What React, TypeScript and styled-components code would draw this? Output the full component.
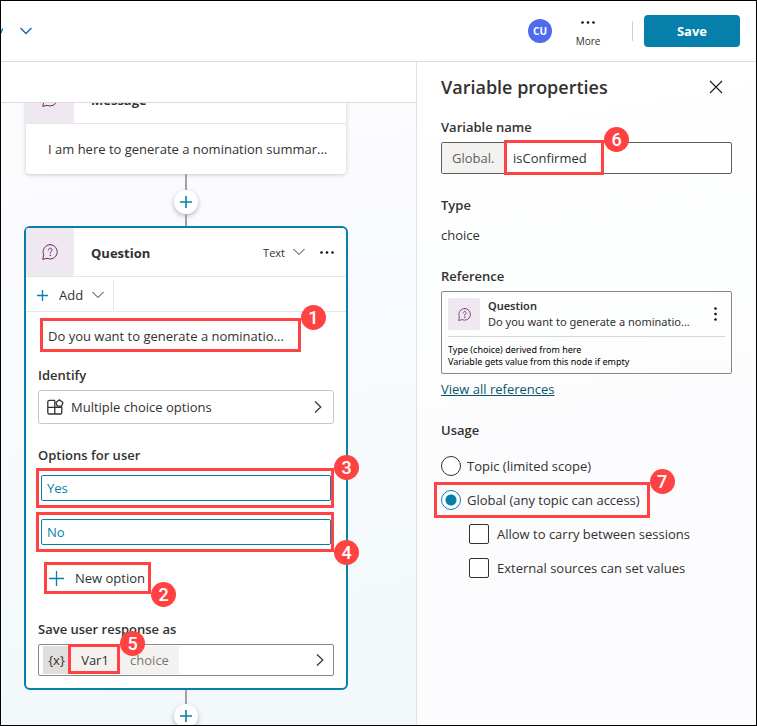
import React from 'react';
import styled, { createGlobalStyle, css } from 'styled-components';

const teal = '#067fab';
const red = '#ff4242';

const GlobalStyle = createGlobalStyle`
  *, *::before, *::after { box-sizing: border-box; }
  body { margin: 0; background: #fff; }
  body, button, input { font-family: 'Open Sans', 'Noto Sans', sans-serif; font-size: 13px; color: #323130; }
  button { margin: 0; padding: 0; border: 0; background: none; cursor: pointer; }
  svg { display: block; flex: none; }
  h1, h2, h3, p { margin: 0; }
`;

const Page = styled.div`
  display: flex;
  flex-direction: column;
  height: 100vh;
  border: 1px solid #000;
  overflow: hidden;
`;

const TopBar = styled.header`
  flex: none;
  display: flex;
  align-items: center;
  height: 61px;
  padding-right: 16px;
  border-bottom: 1px solid #dcdcdc;
  background: #fff;
`;

const TopicMenu = styled.button`
  display: flex;
  align-items: center;
  gap: 17px;
  color: #1464a8;
`;

const Actions = styled.div`
  display: flex;
  align-items: center;
  margin-left: auto;
`;

const Avatar = styled.button`
  width: 24px;
  height: 24px;
  margin-right: 23px;
  border-radius: 50%;
  background: #4f6bed;
  color: #fff;
  font-size: 10px;
  font-weight: 700;
`;

const MoreButton = styled.button`
  display: flex;
  flex-direction: column;
  align-items: center;
  gap: 9px;
  width: 26px;
  margin-right: 31px;
  padding-top: 7px;
  font-size: 10px;
  line-height: 16px;
`;

const Divider = styled.span`
  width: 1px;
  height: 20px;
  margin-right: 11px;
  background: #d2d0ce;
`;

const SaveButton = styled.button`
  width: 96px;
  height: 32px;
  border-radius: 4px;
  background: ${teal};
  color: #fff;
  font-weight: 700;
`;

const Workspace = styled.div`
  flex: 1;
  display: flex;
  min-height: 0;
`;

const Editor = styled.main`
  flex: 1;
  display: flex;
  flex-direction: column;
  min-width: 0;
`;

const Toolbar = styled.div`
  flex: none;
  height: 41px;
  border-bottom: 1px solid #dcdcdc;
  background: #fff;
`;

const Canvas = styled.div`
  flex: 1;
  min-height: 0;
  padding-left: 23px;
  overflow: hidden;
  background: linear-gradient(170deg, #fcfcfe 0%, #f9faff 35%, #f4f9fb 75%, #f2f7fa 100%);
`;

const Flow = styled.div`
  display: flex;
  flex-direction: column;
  align-items: center;
  width: 324px;
  margin-top: -28px;
`;

const MessageCard = styled.section`
  width: 320px;
  border-radius: 4px;
  background: #fff;
  box-shadow: 0 1px 4px rgba(0, 0, 0, 0.2);
`;

const QuestionCard = styled.section`
  width: 100%;
  border: 2px solid ${teal};
  border-radius: 6px;
  background: #fff;
`;

const CardHeader = styled.div`
  display: flex;
  align-items: center;
  height: 49px;
  padding-right: 12px;
  border-bottom: 1px solid #e6e6e6;
`;

const IconTile = styled.span<{ $size: number }>`
  flex: none;
  display: flex;
  align-items: center;
  justify-content: center;
  width: ${(p) => p.$size}px;
  height: ${(p) => p.$size}px;
  border-radius: 2px;
  background: #efe8f0;
  color: #742774;
`;

const CardTitle = styled.h2`
  flex: 1;
  margin-left: 17px;
  padding-top: 2px;
  font-size: 13px;
  line-height: 20px;
  font-weight: 700;
`;

const KindButton = styled.button`
  display: flex;
  align-items: center;
  gap: 8px;
  margin-right: 15px;
  font-size: 11px;
`;

const MessageText = styled.p`
  padding: 15px 12px 15px 22px;
  line-height: 20px;
  white-space: nowrap;
`;

const Stem = styled.span<{ $length: number }>`
  width: 2px;
  height: ${(p) => p.$length}px;
  background: #a3a3a3;
`;

const AddNode = styled.button`
  flex: none;
  display: flex;
  align-items: center;
  justify-content: center;
  width: 24px;
  height: 24px;
  border-radius: 50%;
  background: #fff;
  color: ${teal};
  box-shadow: 0 2px 5px rgba(0, 0, 0, 0.26);
`;

const AddBar = styled.div`
  display: flex;
  height: 35px;
  border-bottom: 1px solid #e6e6e6;
`;

const AddButton = styled.button`
  display: flex;
  align-items: center;
  gap: 9px;
  margin: 3px 0 1px;
  padding: 0 9px 0 11px;
  border-right: 1px solid #e6e6e6;

  svg:first-child { margin-right: 2px; color: ${teal}; }
`;

const CardBody = styled.div`
  padding: 6px 12px 12px;
`;

const Marked = styled.div`
  position: relative;
`;

const Prompt = styled(Marked)`
  width: max-content;
  padding: 8px 10px 6px;
  line-height: 20px;
  white-space: nowrap;
`;

const FieldLabel = styled.label<{ $above?: number; $below?: number }>`
  display: block;
  margin-top: ${(p) => p.$above ?? 0}px;
  margin-bottom: ${(p) => p.$below ?? 5}px;
  line-height: 20px;
  font-weight: 600;
`;

const PickerButton = styled.button`
  display: flex;
  align-items: center;
  gap: 7px;
  width: 100%;
  height: 34px;
  padding: 0 11px 0 8px;
  border: 1px solid #c8c6c4;
  border-radius: 3px;
  background: #fff;

  svg:last-child { margin-left: auto; }
`;

const OptionRow = styled(Marked)`
  height: 40px;
  margin-bottom: 4px;
  padding: 7px 3px;
`;

const OptionInput = styled.input`
  display: block;
  width: 100%;
  height: 26px;
  padding: 0 5px;
  border: 1px solid ${teal};
  border-radius: 2px;
  outline: 0;
  background: #fff;
  color: ${teal};
`;

const NewOption = styled.button`
  position: relative;
  display: flex;
  align-items: center;
  gap: 11px;
  height: 32px;
  margin: 10px 0 0 6px;
  padding: 0 6px 0 5px;

  svg { color: ${teal}; }
`;

const ResponseField = styled.div`
  display: flex;
  align-items: center;
  height: 32px;
  padding: 0 9px 0 4px;
  border: 1px solid #8a8886;
  border-radius: 2px;
  background: #fff;
`;

const Token = styled.span<{ $tone: string; $dim?: boolean; $width: number }>`
  position: relative;
  display: flex;
  align-items: center;
  justify-content: center;
  width: ${(p) => p.$width}px;
  height: 28px;
  background: ${(p) => p.$tone};
  color: ${(p) => (p.$dim ? '#797775' : '#323130')};
`;

const OpenButton = styled.button`
  margin-left: auto;
`;

const Panel = styled.aside`
  flex: none;
  width: 340px;
  padding: 11px 24px;
  border-left: 1px solid #e1e1e1;
  background: linear-gradient(170deg, #ffffff 0%, #fdfefe 35%, #fcfcfe 60%, #fcfcfe 100%);
`;

const PanelHeader = styled.div`
  display: flex;
  align-items: center;
  justify-content: space-between;
  height: 28px;
  margin-bottom: 16px;
  padding-right: 9px;
`;

const PanelTitle = styled.h1`
  font-size: 18px;
  line-height: 28px;
  font-weight: 600;
`;

const NameField = styled.div`
  display: flex;
  height: 32px;
  border: 1px solid #605e5c;
  border-radius: 2px;
  background: #fff;
`;

const NamePrefix = styled.span`
  display: flex;
  align-items: center;
  width: 62px;
  padding-left: 10px;
  background: #f3f2f1;
  color: #605e5c;
`;

const NameInputWrap = styled(Marked)`
  flex: 1;
  display: flex;
`;

const NameInput = styled.input`
  width: 100%;
  padding: 0 9px;
  border: 0;
  outline: 0;
  background: transparent;
`;

const SectionTitle = styled.h3<{ $above: number }>`
  margin-top: ${(p) => p.$above}px;
  font-size: 13px;
  line-height: 20px;
  font-weight: 600;
`;

const TypeValue = styled.p`
  margin-top: 10px;
  line-height: 20px;
`;

const ReferenceCard = styled.div`
  margin-top: 5px;
  padding: 6px 6px 5px;
  border: 1px solid #8a8886;
  border-radius: 2px;
`;

const ReferenceTop = styled.div`
  display: flex;
  align-items: center;
  gap: 8px;
  padding-bottom: 6px;
  border-bottom: 1px solid #d6d6d6;
`;

const ReferenceText = styled.div`
  flex: 1;
  min-width: 0;
  font-family: 'Noto Sans', sans-serif;
  font-size: 11px;
  line-height: 16px;
  white-space: nowrap;

  strong { display: block; font-weight: 600; }
`;

const KebabButton = styled.button`
  padding: 0 8px;
`;

const ReferenceNote = styled.p`
  padding-top: 7px;
  font-family: 'Noto Sans', sans-serif;
  font-size: 9px;
  line-height: 12px;
  color: #000;
`;

const ReferencesLink = styled.a`
  display: block;
  width: max-content;
  margin-top: 5px;
  line-height: 20px;
  color: #0b556a;
`;

const Choice = styled.label<{ $nested?: boolean }>`
  position: relative;
  display: flex;
  align-items: center;
  gap: ${(p) => (p.$nested ? 8 : 6)}px;
  width: max-content;
  height: 34px;
  margin-left: ${(p) => (p.$nested ? 28 : 0)}px;
`;

const boxControl = css`
  appearance: none;
  width: 20px;
  height: 20px;
  margin: 0;
  border: 1px solid #323130;
  background: #fff;
`;

const Radio = styled.input`
  ${boxControl}
  border-radius: 50%;

  &:checked {
    border-color: ${teal};
    background: radial-gradient(circle, ${teal} 5px, #fff 6px);
  }
`;

const Checkbox = styled.input`
  ${boxControl}
  border-radius: 2px;

  &:checked { background: ${teal}; }
`;

const ChoiceList = styled.div`
  margin-top: 9px;
`;

const Outline = styled.span<{ $inset: string }>`
  position: absolute;
  inset: ${(p) => p.$inset};
  border: 3px solid ${red};
  pointer-events: none;
  z-index: 1;
`;

const Badge = styled.span<{ $bottom?: boolean }>`
  position: absolute;
  left: calc(100% + 3px);
  ${(p) => (p.$bottom ? 'bottom' : 'top')}: -16px;
  display: flex;
  align-items: center;
  justify-content: center;
  width: 25px;
  height: 25px;
  border-radius: 50%;
  background: ${red};
  color: #fff;
  font: 500 18px/25px Roboto, sans-serif;
`;

function Callout({ step, inset = '0', bottom }: { step: number; inset?: string; bottom?: boolean }) {
  return (
    <Outline $inset={inset}>
      <Badge $bottom={bottom}>{step}</Badge>
    </Outline>
  );
}

const ChevronDown = ({ weight = 1 }: { weight?: number }) => (
  <svg width="12" height="8" viewBox="0 0 12 8" fill="none" stroke="currentColor" strokeWidth={weight}>
    <path d="M0.5 1L6 6.5L11.5 1" />
  </svg>
);

const ChevronRight = () => (
  <svg width="8" height="14" viewBox="0 0 8 14" fill="none" stroke="currentColor" strokeWidth="1.2">
    <path d="M1 1.5L6.8 7L1 12.5" />
  </svg>
);

const Plus = ({ size, weight = 1.3 }: { size: number; weight?: number }) => (
  <svg width={size} height={size} viewBox={`0 0 ${size} ${size}`} fill="none" stroke="currentColor" strokeWidth={weight}>
    <path d={`M${size / 2} 0V${size}M0 ${size / 2}H${size}`} />
  </svg>
);

const Dots = ({ vertical }: { vertical?: boolean }) => (
  <svg width={vertical ? 3 : 14} height={vertical ? 14 : 3} viewBox={vertical ? '0 0 3 14' : '0 0 14 3'} fill="#111">
    {[1.5, 7, 12.5].map((c) => (
      <circle key={c} cx={vertical ? 1.5 : c} cy={vertical ? c : 1.5} r="1.3" />
    ))}
  </svg>
);

const QuestionBubble = ({ size }: { size: number }) => (
  <svg width={size} height={size} viewBox="0 0 16 16" fill="none" stroke="currentColor" strokeLinecap="round" strokeLinejoin="round">
    <path d="M8.3 0.6A7.2 7.2 0 1 1 5 14.3L0.7 15.4L1.8 11A7.2 7.2 0 0 1 8.3 0.6Z" />
    <path d="M6.4 6C6.4 3.5 10 3.5 10 5.9C10 7.4 8.2 7.5 8.2 9.2" />
    <circle cx="8.2" cy="11.3" r="0.4" fill="currentColor" strokeWidth="0.6" />
  </svg>
);

const ShapesIcon = () => (
  <svg width="17" height="16" viewBox="0 0 17 16" fill="none" stroke="currentColor" strokeWidth="1.3" strokeLinejoin="round">
    <path d="M8 1.4H2.4A1.6 1.6 0 0 0 0.8 3V13.4A1.6 1.6 0 0 0 2.4 15H13.2A1.6 1.6 0 0 0 14.8 13.4V8.3H0.8M7.8 1.4V15" />
    <path d="M12.4 0.8L15.9 3.4L14.6 7.2H10.2L8.9 3.4Z" />
  </svg>
);

const CloseIcon = () => (
  <svg width="14" height="14" viewBox="0 0 14 14" fill="none" stroke="#222" strokeWidth="1.2">
    <path d="M1 1L13 13M13 1L1 13" />
  </svg>
);

const LetterTail = () => (
  <svg width="2" height="6" viewBox="0 0 2 6" fill="none" stroke={teal} strokeWidth="1.4">
    <path d="M1.6 0.5L0 5" />
  </svg>
);

export default function App() {
  const [name, setName] = React.useState('isConfirmed');
  const [options, setOptions] = React.useState(['Yes', 'No']);
  const [scope, setScope] = React.useState('global');

  const editOption = (index: number, value: string) =>
    setOptions(options.map((option, i) => (i === index ? value : option)));

  return (
    <>
      <GlobalStyle />
      <Page>
        <TopBar>
          <TopicMenu aria-label="Topic menu">
            <LetterTail />
            <ChevronDown weight={1.3} />
          </TopicMenu>
          <Actions>
            <Avatar>CU</Avatar>
            <MoreButton>
              <Dots />
              More
            </MoreButton>
            <Divider />
            <SaveButton>Save</SaveButton>
          </Actions>
        </TopBar>
        <Workspace>
          <Editor>
            <Toolbar />
            <Canvas>
              <Flow>
                <MessageCard>
                  <CardHeader>
                    <IconTile $size={48}><QuestionBubble size={16} /></IconTile>
                    <CardTitle>Message</CardTitle>
                  </CardHeader>
                  <MessageText>I am here to generate a nomination summar...</MessageText>
                </MessageCard>
                <Stem $length={16} />
                <AddNode aria-label="Add node"><Plus size={12} weight={1.6} /></AddNode>
                <Stem $length={12} />
                <QuestionCard>
                  <CardHeader>
                    <IconTile $size={48}><QuestionBubble size={16} /></IconTile>
                    <CardTitle>Question</CardTitle>
                    <KindButton>Text <ChevronDown /></KindButton>
                    <button aria-label="More actions"><Dots /></button>
                  </CardHeader>
                  <AddBar>
                    <AddButton><Plus size={11} /> Add <ChevronDown /></AddButton>
                  </AddBar>
                  <CardBody>
                    <Prompt>
                      Do you want to generate a nominatio...
                      <Callout step={1} inset="0 -7px 0 2px" />
                    </Prompt>
                    <FieldLabel as="div" id="identify" $above={13}>Identify</FieldLabel>
                    <PickerButton aria-describedby="identify">
                      <ShapesIcon />
                      Multiple choice options
                      <ChevronRight />
                    </PickerButton>
                    <FieldLabel htmlFor="option-0" $above={21} $below={3}>Options for user</FieldLabel>
                    {options.map((option, i) => (
                      <OptionRow key={i}>
                        <OptionInput
                          id={`option-${i}`}
                          aria-label={`Option ${i + 1}`}
                          value={option}
                          onChange={(e) => editOption(i, e.target.value)}
                        />
                        <Callout step={i + 3} inset="0 0 0 -2px" bottom={i === 1} />
                      </OptionRow>
                    ))}
                    <NewOption>
                      <Plus size={15} />
                      New option
                      <Callout step={2} bottom />
                    </NewOption>
                    <FieldLabel as="div" id="response" $above={25}>Save user response as</FieldLabel>
                    <ResponseField role="group" aria-labelledby="response">
                      <Token $tone="#e1dfdd" $width={27}>{'{x}'}</Token>
                      <Token $tone="#f3f2f1" $width={50}>
                        Var1
                        <Callout step={5} inset="-2px 0 0 -2px" />
                      </Token>
                      <Token $tone="#f3f2f1" $width={59} $dim>choice</Token>
                      <OpenButton aria-label="Select a variable"><ChevronRight /></OpenButton>
                    </ResponseField>
                  </CardBody>
                </QuestionCard>
                <Stem $length={14} />
                <AddNode aria-label="Add node"><Plus size={12} weight={1.6} /></AddNode>
              </Flow>
            </Canvas>
          </Editor>
          <Panel>
            <PanelHeader>
              <PanelTitle>Variable properties</PanelTitle>
              <button aria-label="Close"><CloseIcon /></button>
            </PanelHeader>
            <FieldLabel htmlFor="variable-name">Variable name</FieldLabel>
            <NameField>
              <NamePrefix>Global.</NamePrefix>
              <NameInputWrap>
                <NameInput id="variable-name" value={name} onChange={(e) => setName(e.target.value)} />
                <Callout step={6} inset="-3px 127px -2px 0" />
              </NameInputWrap>
            </NameField>
            <SectionTitle $above={21}>Type</SectionTitle>
            <TypeValue>choice</TypeValue>
            <SectionTitle $above={21}>Reference</SectionTitle>
            <ReferenceCard>
              <ReferenceTop>
                <IconTile $size={32}><QuestionBubble size={13} /></IconTile>
                <ReferenceText>
                  <strong>Question</strong>
                  Do you want to generate a nominatio...
                </ReferenceText>
                <KebabButton aria-label="Reference actions"><Dots vertical /></KebabButton>
              </ReferenceTop>
              <ReferenceNote>
                Type (choice) derived from here
                <br />
                Variable gets value from this node if empty
              </ReferenceNote>
            </ReferenceCard>
            <ReferencesLink href="#references">View all references</ReferencesLink>
            <SectionTitle $above={21}>Usage</SectionTitle>
            <ChoiceList>
              <Choice>
                <Radio type="radio" name="scope" checked={scope === 'topic'} onChange={() => setScope('topic')} />
                Topic (limited scope)
              </Choice>
              <Choice>
                <Radio type="radio" name="scope" checked={scope === 'global'} onChange={() => setScope('global')} />
                Global (any topic can access)
                <Callout step={7} inset="-1px -10px -1px -7px" />
              </Choice>
              <Choice $nested>
                <Checkbox type="checkbox" />
                Allow to carry between sessions
              </Choice>
              <Choice $nested>
                <Checkbox type="checkbox" />
                External sources can set values
              </Choice>
            </ChoiceList>
          </Panel>
        </Workspace>
      </Page>
    </>
  );
}
